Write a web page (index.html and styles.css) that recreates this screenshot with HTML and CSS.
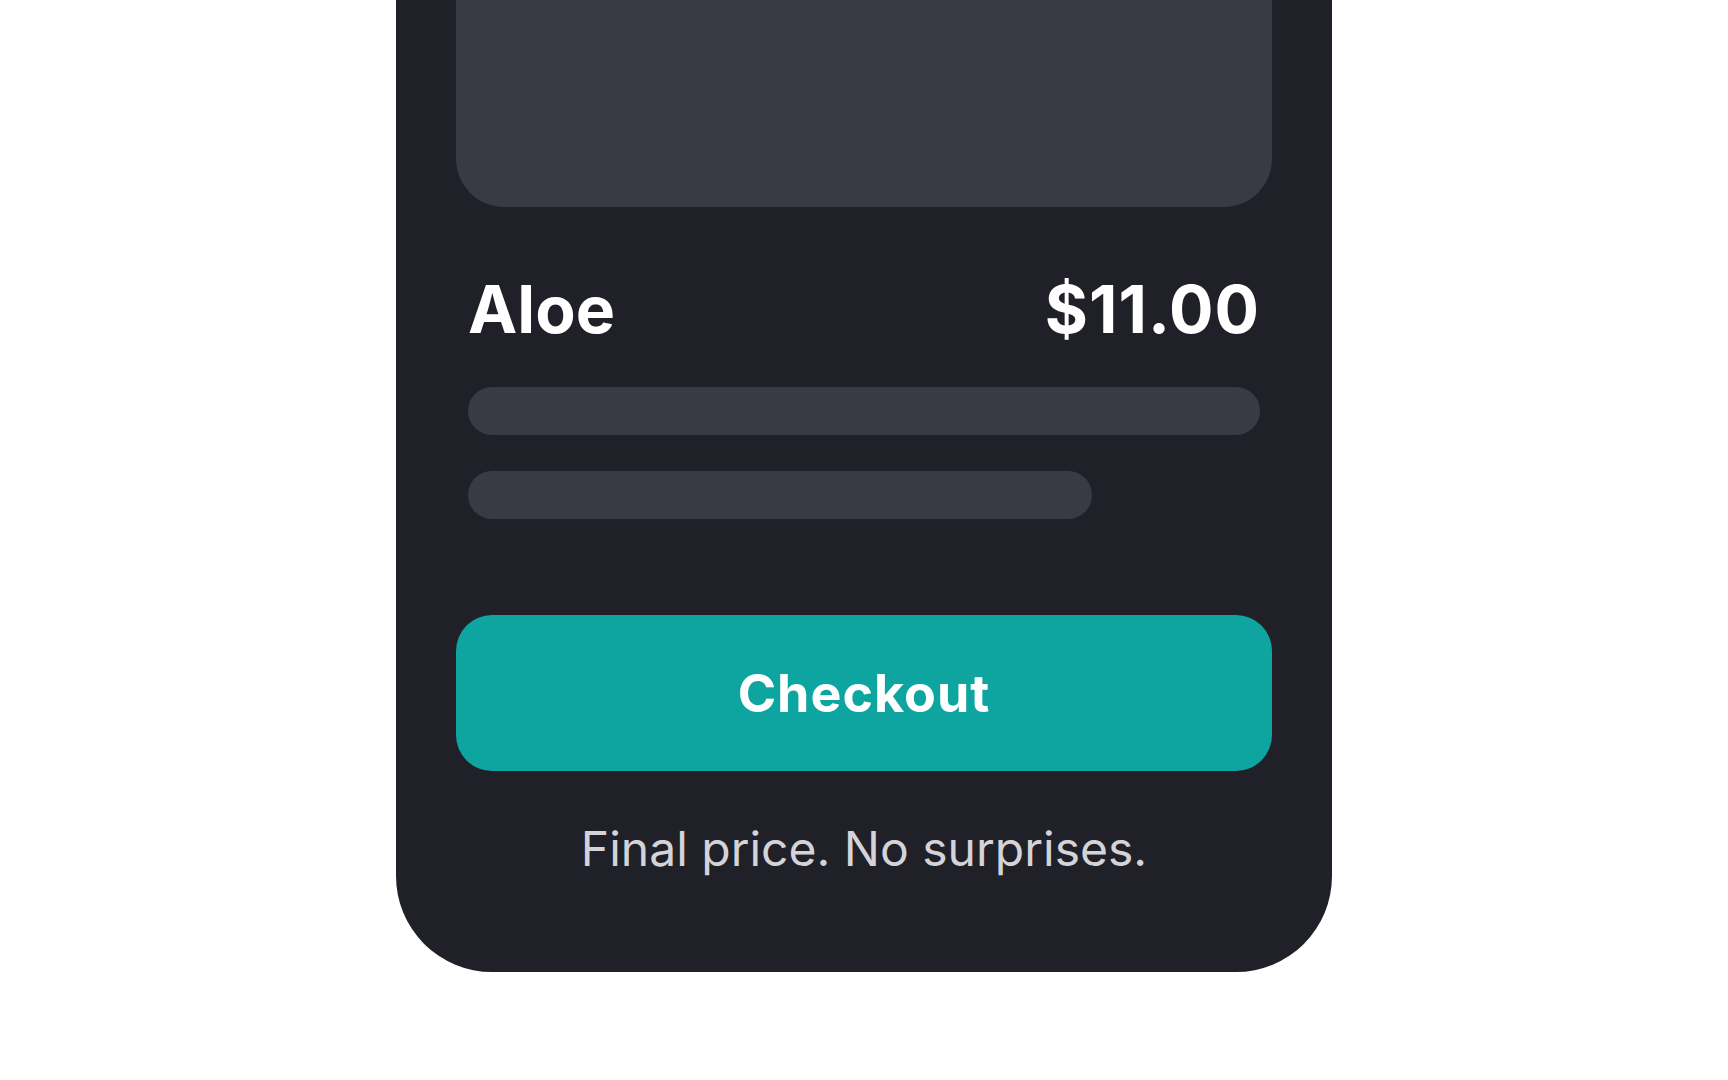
FILE: index.html
```html
<!DOCTYPE html>
<html lang="en">
<head>
<meta charset="utf-8">
<title>Checkout</title>
<link rel="stylesheet" href="styles.css">
</head>
<body>
<main class="page">
  <section class="card">
    <div class="media"></div>
    <div class="info">
      <div class="title-row">
        <h1 class="name">Aloe</h1>
        <span class="price">$11.00</span>
      </div>
      <div class="skeleton skeleton-full"></div>
      <div class="skeleton skeleton-short"></div>
    </div>
    <button class="checkout" type="button">Checkout</button>
    <p class="note">Final price. No surprises.</p>
  </section>
</main>
</body>
</html>
```

FILE: styles.css
```css
* { box-sizing: border-box; }
html, body {
  margin: 0;
  padding: 0;
  background: #ffffff;
  font-family: Inter, "Noto Sans", "Liberation Sans", sans-serif;
}
.page {
  display: flex;
  justify-content: center;
  height: 1080px;
  overflow: hidden;
}
.card {
  width: 936px;
  margin-top: -669px;
  padding: 60px 60px 87px;
  background: #202029;
  border-radius: 96px;
  display: flex;
  flex-direction: column;
  align-self: flex-start;
}
.media {
  height: 816px;
  background: #3a3a44;
  border-radius: 48px;
}
.info {
  padding: 0 12px;
}
.title-row {
  display: flex;
  justify-content: space-between;
  align-items: baseline;
  margin-top: 64px;
}
.name, .price {
  margin: 0;
  font-size: 66px;
  line-height: 77px;
  font-weight: 700;
  color: #ffffff;
}
.price {
  letter-spacing: 1px;
}
.skeleton {
  height: 48px;
  border-radius: 24px;
  background: #3a3a44;
}
.skeleton-full { margin-top: 39px; }
.skeleton-short { margin-top: 36px; width: 624px; }
.checkout {
  margin-top: 96px;
  height: 156px;
  border: 0;
  border-radius: 36px;
  background: #0ea5a0;
  color: #ffffff;
  font-family: inherit;
  font-size: 52px;
  font-weight: 700;
  letter-spacing: 1px;
}
.note {
  margin: 42px 0 0;
  text-align: center;
  font-size: 48px;
  line-height: 72px;
  color: #d4d4d8;
}
```
